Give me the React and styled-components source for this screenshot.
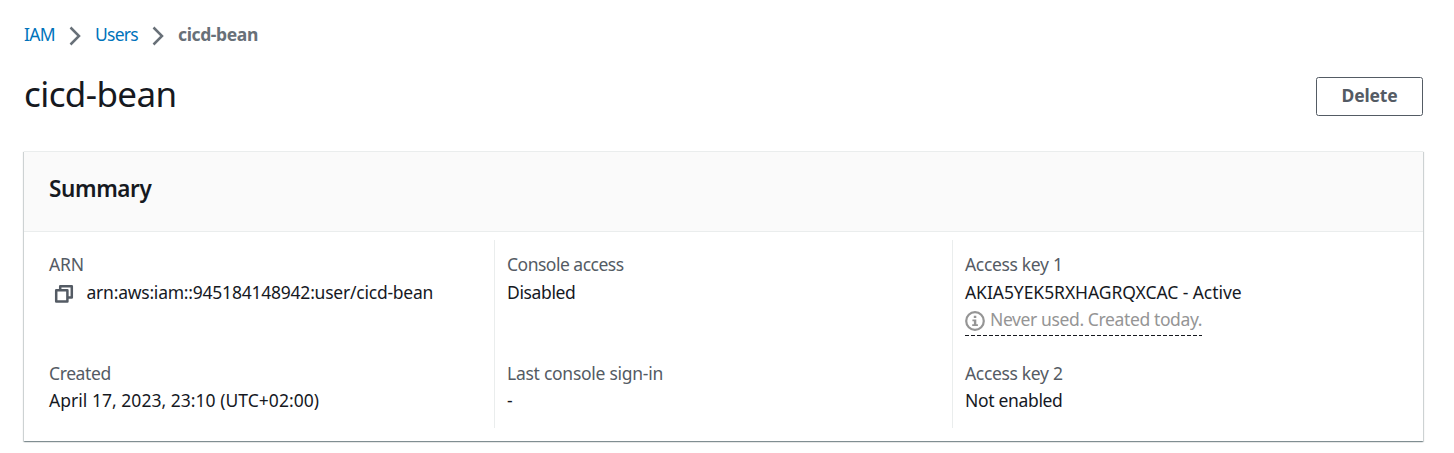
import React from "react";
import styled, { createGlobalStyle } from "styled-components";

const GlobalStyle = createGlobalStyle`
  *, *::before, *::after { box-sizing: border-box; }
  body {
    margin: 0;
    background: #fff;
    color: #16191f;
    font-family: "Noto Sans", "Open Sans", sans-serif;
    font-size: 17.5px;
    line-height: 27.5px;
  }
`;

const Page = styled.main`
  padding: 20px 31px 12px 24px;
`;

const Breadcrumbs = styled.nav`
  display: flex;
  align-items: center;
  height: 30px;
`;

const Crumb = styled.a`
  color: #0073bb;
  text-decoration: none;
  white-space: nowrap;
  width: ${(p) => p.$width}px;
  letter-spacing: ${(p) => p.$track}px;
`;

const CurrentCrumb = styled.span`
  color: #687078;
  font-weight: 700;
  letter-spacing: -0.37px;
`;

const Chevron = styled.svg`
  width: 12px;
  height: 20px;
  margin: 2px 14px 0 13px;
  fill: none;
  stroke: #687078;
  stroke-width: 2.5;
`;

const TitleBar = styled.header`
  display: flex;
  justify-content: space-between;
  align-items: flex-start;
  margin-top: 20px;
  height: 81px;
`;

const Title = styled.h1`
  margin: 1px 0 0;
  font-size: 35px;
  line-height: 45px;
  font-weight: 400;
  letter-spacing: -0.6px;
`;

const Button = styled.button`
  width: 107px;
  height: 39px;
  margin-top: 7px;
  padding: 0 0 1px;
  background: #fff;
  border: 1px solid #545b64;
  border-radius: 2.5px;
  color: #545b64;
  font: 700 17.5px/27.5px "Noto Sans", "Open Sans", sans-serif;
  letter-spacing: -0.15px;
`;

const Card = styled.section`
  height: 290px;
  background: #fff;
  border-top: 1px solid #eaeded;
  box-shadow: 0 1px 1px 0 rgba(0, 28, 36, 0.3), 1px 1px 1px 0 rgba(0, 28, 36, 0.15),
    -1px 1px 1px 0 rgba(0, 28, 36, 0.15);
`;

const CardHeader = styled.div`
  height: 80px;
  padding: 23px 25px 0;
  background: #fafafa;
  border-bottom: 1px solid #eaeded;
`;

const CardTitle = styled.h2`
  margin: 0;
  font-size: 22.5px;
  line-height: 28px;
  font-weight: 600;
  letter-spacing: -0.4px;
`;

const Columns = styled.div`
  display: grid;
  grid-template-columns: 470px 458px 1fr;
  padding-top: 8px;
`;

const Column = styled.div`
  display: grid;
  grid-template-rows: 108.8px 68px;
  height: 188px;
  padding: 11px 0 0 ${(p) => (p.$divided ? 12 : 25)}px;
  border-left: ${(p) => (p.$divided ? "1px solid #eaeded" : "0")};
`;

const Field = styled.div`
  display: flex;
  flex-direction: column;
  align-items: flex-start;
`;

const Label = styled.div`
  color: #545b64;
  letter-spacing: ${(p) => p.$track}px;
`;

const Value = styled.div`
  display: flex;
  align-items: center;
  white-space: nowrap;
  letter-spacing: ${(p) => p.$track || 0}px;
`;

const CopyIcon = styled.svg`
  width: 20px;
  height: 20px;
  margin: 3px 12.5px 0 5px;
  fill: none;
  stroke: #545b64;
  stroke-width: 2.5;
  stroke-linejoin: round;
`;

const KeyNote = styled.div`
  display: flex;
  align-items: center;
  height: 30px;
  padding-bottom: 3px;
  width: 237px;
  color: #959595;
  white-space: nowrap;
  letter-spacing: -0.38px;
  background: repeating-linear-gradient(90deg, #16191f 0 4px, transparent 4px 6px) left bottom / 100% 1px no-repeat;
`;

const InfoIcon = styled.svg`
  width: 20px;
  height: 20px;
  margin: 2px 5px 0 0;
  flex: none;
`;

function Separator() {
  return (
    <Chevron viewBox="0 0 12 20">
      <path d="M1.5 1.5 10 10 1.5 18.5" />
    </Chevron>
  );
}

export default function App() {
  return (
    <>
      <GlobalStyle />
      <Page>
        <Breadcrumbs>
          <Crumb $width={32} $track={-0.7}>IAM</Crumb>
          <Separator />
          <Crumb $width={44} $track={-0.75}>Users</Crumb>
          <Separator />
          <CurrentCrumb>cicd-bean</CurrentCrumb>
        </Breadcrumbs>
        <TitleBar>
          <Title>cicd-bean</Title>
          <Button>Delete</Button>
        </TitleBar>
        <Card>
          <CardHeader>
            <CardTitle>Summary</CardTitle>
          </CardHeader>
          <Columns>
            <Column>
              <Field>
                <Label $track={-0.2}>ARN</Label>
                <Value $track={-0.23}>
                  <CopyIcon viewBox="0 0 20 20">
                    <path d="M2.2 6.2h11.2v11.2H2.2z" />
                    <path d="M6.2 6.2V2.2h11.6v11.2h-4.4" />
                  </CopyIcon>
                  arn:aws:iam::945184148942:user/cicd-bean
                </Value>
              </Field>
              <Field>
                <Label $track={-0.4}>Created</Label>
                <Value $track={0.03}>April 17, 2023, 23:10 (UTC+02:00)</Value>
              </Field>
            </Column>
            <Column $divided>
              <Field>
                <Label $track={-0.5}>Console access</Label>
                <Value $track={-0.36}>Disabled</Value>
              </Field>
              <Field>
                <Label $track={-0.27}>Last console sign-in</Label>
                <Value>-</Value>
              </Field>
            </Column>
            <Column $divided>
              <Field>
                <Label $track={-0.33}>Access key 1</Label>
                <Value $track={-0.06}>AKIA5YEK5RXHAGRQXCAC - Active</Value>
                <KeyNote>
                  <InfoIcon viewBox="0 0 20 20">
                    <circle cx="10" cy="10" r="8.8" fill="none" stroke="#959595" strokeWidth="2.2" />
                    <path d="M8.8 4.8h2.5v2.3H8.8zM7.4 8.4h3.9v4.8h1.6V15H7.2v-1.8h1.7v-3H7.4z" fill="#959595" />
                  </InfoIcon>
                  Never used. Created today.
                </KeyNote>
              </Field>
              <Field>
                <Label $track={-0.33}>Access key 2</Label>
                <Value $track={-0.33}>Not enabled</Value>
              </Field>
            </Column>
          </Columns>
        </Card>
      </Page>
    </>
  );
}
